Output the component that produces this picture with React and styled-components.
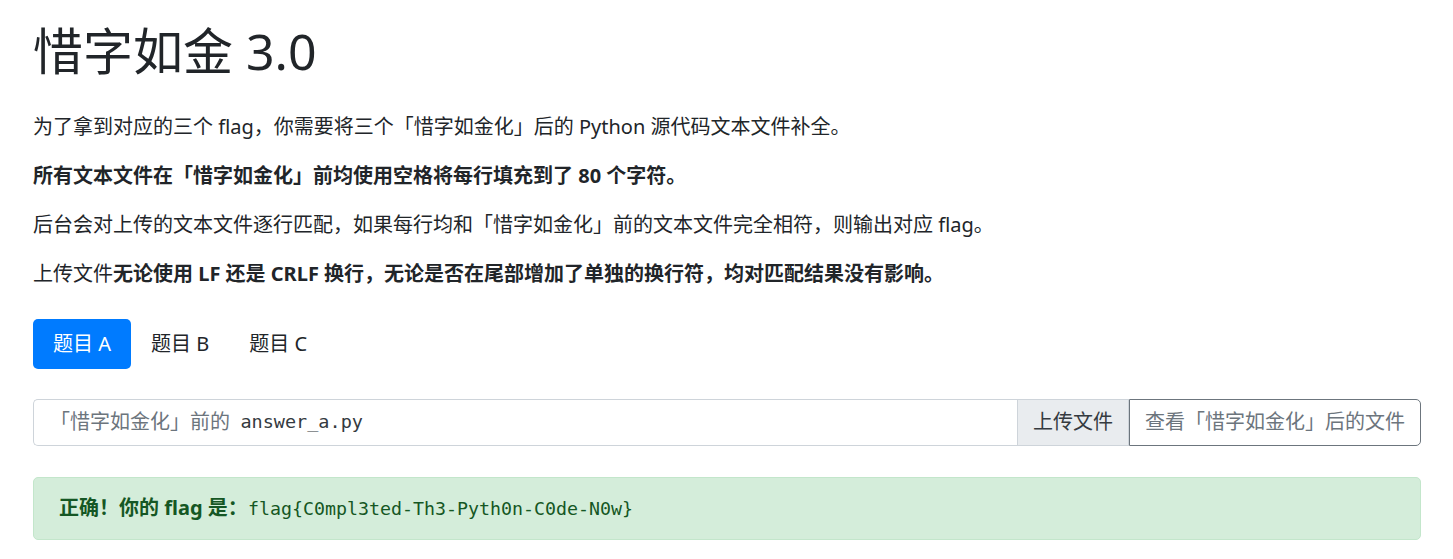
import React from 'react';
import styled, { createGlobalStyle } from 'styled-components';

const GlobalStyle = createGlobalStyle`
  html, body { margin: 0; padding: 0; background: #fff; }
  body {
    font-family: "Noto Sans", "Noto Sans CJK SC", sans-serif;
    color: #212529;
    font-size: 20px;
    line-height: 1.5;
  }
`;

const Page = styled.main`
  padding: 0 32px 0 33px;
`;

const Title = styled.h1`
  margin: 21px 0 31px;
  font-size: 50px;
  font-weight: 400;
  line-height: 60px;
  color: #212529;
`;

const Para = styled.p`
  margin: 0 0 20px;
  line-height: 29px;
  font-weight: ${p => (p.$bold ? 700 : 400)};
`;

const Strong = styled.strong`
  font-weight: 700;
`;

const Nav = styled.nav`
  display: flex;
  margin: 30.5px 0 30px;
`;

const Pill = styled.button`
  border: none;
  font: inherit;
  font-size: 20px;
  line-height: 30px;
  padding: 10px 20px;
  border-radius: 5px;
  cursor: pointer;
  background: ${p => (p.$active ? '#007bff' : 'transparent')};
  color: ${p => (p.$active ? '#fff' : '#212529')};
`;

const InputGroup = styled.div`
  display: flex;
  height: 47px;
  margin-bottom: 31px;
`;

const FileLabel = styled.label`
  flex: 1;
  display: flex;
  align-items: center;
  padding: 0 15px 0 16px;
  border: 1px solid #ced4da;
  border-right: none;
  border-radius: 5px 0 0 5px;
  color: #6c757d;
  white-space: pre;
`;

const Mono = styled.span`
  font-family: "DejaVu Sans Mono", "Liberation Mono", monospace;
  font-size: ${p => p.$size || '18px'};
  color: ${p => p.$color || 'inherit'};
`;

const UploadTag = styled.span`
  display: flex;
  align-items: center;
  padding: 0 15px;
  background: #e9ecef;
  border: 1px solid #ced4da;
  color: #343a40;
`;

const ViewButton = styled.button`
  font: inherit;
  font-size: 20px;
  padding: 0 15px;
  background: #fff;
  border: 1px solid #6c757d;
  border-radius: 0 5px 5px 0;
  color: #6c757d;
  cursor: pointer;
`;

const Alert = styled.div`
  padding: 15px 25px;
  line-height: 30px;
  border: 1px solid #c3e6cb;
  background: #d4edda;
  color: #155724;
  border-radius: 5px;
`;

export default function App() {
  const tabs = ['题目 A', '题目 B', '题目 C'];
  return (
    <>
      <GlobalStyle />
      <Page>
        <Title>惜字如金 3.0</Title>
        <Para>为了拿到对应的三个 flag，你需要将三个「惜字如金化」后的 Python 源代码文本文件补全。</Para>
        <Para $bold>所有文本文件在「惜字如金化」前均使用空格将每行填充到了 80 个字符。</Para>
        <Para>后台会对上传的文本文件逐行匹配，如果每行均和「惜字如金化」前的文本文件完全相符，则输出对应 flag。</Para>
        <Para>上传文件<Strong>无论使用 LF 还是 CRLF 换行，无论是否在尾部增加了单独的换行符，均对匹配结果没有影响。</Strong></Para>
        <Nav>
          {tabs.map((t, i) => (
            <Pill key={t} $active={i === 0}>{t}</Pill>
          ))}
        </Nav>
        <InputGroup>
          <FileLabel>「惜字如金化」前的  <Mono $size="18.5px" $color="#343a40">answer_a.py</Mono></FileLabel>
          <UploadTag>上传文件</UploadTag>
          <ViewButton>查看「惜字如金化」后的文件</ViewButton>
        </InputGroup>
        <Alert>
          <Strong>正确！你的 flag 是：</Strong>
          <Mono $size="18.3px">flag{'{'}C0mpl3ted-Th3-Pyth0n-C0de-N0w{'}'}</Mono>
        </Alert>
      </Page>
    </>
  );
}
